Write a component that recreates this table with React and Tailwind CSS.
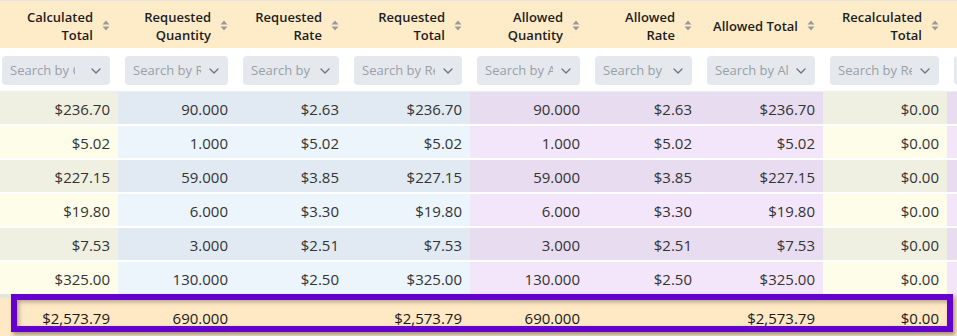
import React from "react";

const columns = [
  { lines: ["Calculated", "Total"], search: "Search by Calculated Total", w: "w-[118px]", group: "a", first: true },
  { lines: ["Requested", "Quantity"], search: "Search by Requested Quantity", w: "w-[118px]", group: "r" },
  { lines: ["Requested", "Rate"], search: "Search by Requested Rate", w: "w-[111px]", group: "r" },
  { lines: ["Requested", "Total"], search: "Search by Requested Total", w: "w-[123px]", group: "r" },
  { lines: ["Allowed", "Quantity"], search: "Search by Allowed Quantity", w: "w-[118px]", group: "l" },
  { lines: ["Allowed", "Rate"], search: "Search by Allowed Rate", w: "w-[112px]", group: "l" },
  { lines: ["Allowed Total"], search: "Search by Allowed Total", w: "w-[123px]", group: "l" },
  { lines: ["Recalculated", "Total"], search: "Search by Recalculated Total", w: "w-[124px]", group: "a" },
  { lines: ["Final Payable", "Total"], search: "", w: "w-[123px]", group: "l" },
];

const rows = [
  ["$236.70", "90.000", "$2.63", "$236.70", "90.000", "$2.63", "$236.70", "$0.00", ""],
  ["$5.02", "1.000", "$5.02", "$5.02", "1.000", "$5.02", "$5.02", "$0.00", ""],
  ["$227.15", "59.000", "$3.85", "$227.15", "59.000", "$3.85", "$227.15", "$0.00", ""],
  ["$19.80", "6.000", "$3.30", "$19.80", "6.000", "$3.30", "$19.80", "$0.00", ""],
  ["$7.53", "3.000", "$2.51", "$7.53", "3.000", "$2.51", "$7.53", "$0.00", ""],
  ["$325.00", "130.000", "$2.50", "$325.00", "130.000", "$2.50", "$325.00", "$0.00", ""],
];

const totals = ["$2,573.79", "690.000", "", "$2,573.79", "690.000", "", "$2,573.79", "$0.00", ""];

// striped cell colours per column group
const shade = {
  a: ["bg-[#f0f0e2]", "bg-[#fdfdea]"],
  r: ["bg-[#e1eaf3]", "bg-[#ecf4fc]"],
  l: ["bg-[#e8dcf0]", "bg-[#f4e6fa]"],
};

const SortIcon = () => (
  <svg width="8" height="11" viewBox="0 0 8 11" className="shrink-0">
    <path d="M4 0.5 L7.5 4.5 L0.5 4.5 Z" fill="#9a9a9a" />
    <path d="M0.5 6.5 L7.5 6.5 L4 10.5 Z" fill="#9a9a9a" />
  </svg>
);

const Chevron = ({ wide }) => (
  <svg width="10" height="6" viewBox="0 0 10 6" className={`shrink-0 ${wide ? "ml-4" : "ml-2"}`}>
    <polyline points="1,1 5,5 9,1" fill="none" stroke="#6f747c" strokeWidth="1.3" strokeLinecap="round" strokeLinejoin="round" />
  </svg>
);

export default function App() {
  return (
    <div
      className="relative w-[957px] h-[336px] overflow-hidden bg-white"
      style={{ fontFamily: '"Open Sans", "Liberation Sans", sans-serif' }}
    >
      <div className="w-max">
        {/* header */}
        <div className="flex border-t border-[#e3e3e3] bg-[#feebc8]">
          {columns.map((c, i) => (
            <div
              key={i}
              className={`${c.w} shrink-0 h-[47px] flex items-center justify-end gap-[9px] pr-2 pt-[2px]`}
            >
              <div className="text-right text-[13px] leading-[18px] font-semibold text-[#1d1d1d] whitespace-nowrap">
                {c.lines.map((l, j) => (
                  <div key={j}>{l}</div>
                ))}
              </div>
              <SortIcon />
            </div>
          ))}
        </div>

        {/* filter row */}
        <div className="flex bg-white border-b border-[#eceef0]">
          {columns.map((c, i) => (
            <div
              key={i}
              className={`${c.w} shrink-0 h-[43px] pt-[8px] pr-2 ${c.first ? "pl-[2px]" : "pl-[7px]"}`}
            >
              <div className="h-[29px] flex items-center rounded-[4px] bg-[#e5e8ed] pl-2 pr-[9px]">
                <input
                  readOnly
                  placeholder={c.search}
                  className="flex-1 min-w-0 bg-transparent outline-none text-[13px] placeholder:text-[#9aa0a9]"
                />
                <Chevron wide={c.first} />
              </div>
            </div>
          ))}
        </div>

        {/* data rows */}
        {rows.map((r, ri) => (
          <div
            key={ri}
            className={`flex h-[34px] border-b-2 ${ri === rows.length - 1 ? "border-[#e4e4e4]" : "border-white/60"}`}
          >
            {r.map((v, ci) => (
              <div
                key={ci}
                className={`${columns[ci].w} shrink-0 flex items-center justify-end pr-2 pt-[2px] text-[15px] text-[#333] ${shade[columns[ci].group][ri % 2]}`}
              >
                {v}
              </div>
            ))}
          </div>
        ))}

        {/* totals */}
        <div className="flex border-t-2 border-[#e4e4e4] bg-[#fee9c4]">
          {totals.map((v, ci) => (
            <div
              key={ci}
              className={`${columns[ci].w} shrink-0 h-[40px] flex items-center justify-end pr-2 text-[15px] text-[#1a1a1a]`}
            >
              {v}
            </div>
          ))}
        </div>
      </div>

      {/* highlight around the totals row */}
      <div className="pointer-events-none absolute left-[11px] top-[294px] w-[942px] h-[38px] border-[6px] border-[#6600cc] shadow-[2px_3px_4px_rgba(0,0,0,0.35),inset_2px_2px_4px_rgba(0,0,0,0.3)]" />
    </div>
  );
}
